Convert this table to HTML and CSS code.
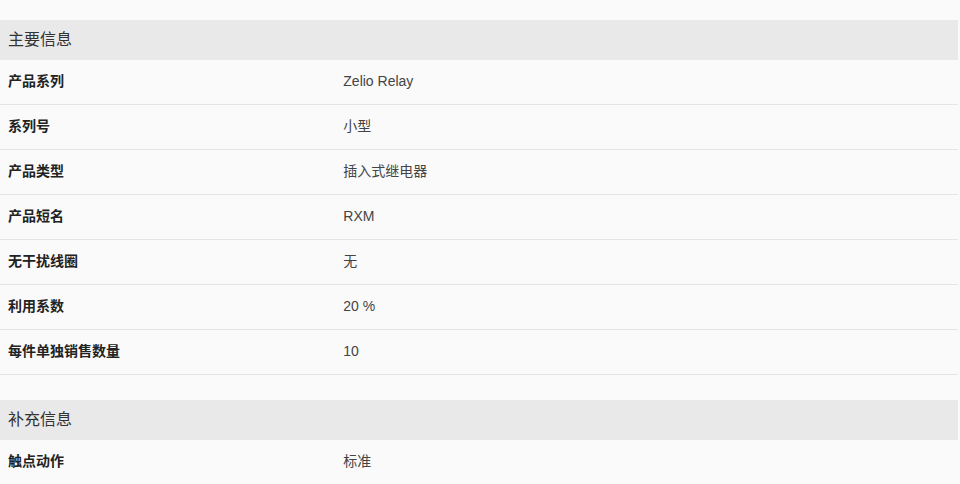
FILE: index.html
```html
<!DOCTYPE html>
<html lang="zh-CN">
<head>
  <meta charset="UTF-8" />
  <title>产品规格</title>
  <link rel="stylesheet" href="styles.css">
</head>
<body>
  <div class="specs">
    <div class="section">
      <h2 class="section-title">主要信息</h2>
      <table class="spec-table">
        <tr><th>产品系列</th><td>Zelio Relay</td></tr>
        <tr><th>系列号</th><td>小型</td></tr>
        <tr><th>产品类型</th><td>插入式继电器</td></tr>
        <tr><th>产品短名</th><td>RXM</td></tr>
        <tr><th>无干扰线圈</th><td>无</td></tr>
        <tr><th>利用系数</th><td>20 %</td></tr>
        <tr><th>每件单独销售数量</th><td>10</td></tr>
      </table>
    </div>
    <div class="section">
      <h2 class="section-title">补充信息</h2>
      <table class="spec-table">
        <tr><th>触点动作</th><td>标准</td></tr>
      </table>
    </div>
  </div>
</body>
</html>
```

FILE: styles.css
```css
/* Page */
body {
  margin: 0;
  background-color: #fafafa;
  font-family: 'Liberation Sans', 'Noto Sans CJK SC', Arial, sans-serif;
  color: #333;
}

.specs {
  width: 958px;
  padding-top: 20px;
}

.section {
  margin-bottom: 25px;
}

/* Section header */
.section-title {
  margin: 0;
  height: 40px;
  line-height: 40px;
  padding: 0 8px;
  background-color: #e9e9e9;
  font-size: 16px;
  font-weight: normal;
  color: #333;
}

/* Rows */
.spec-table {
  width: 100%;
  border-collapse: collapse;
  font-size: 14px;
  line-height: 20px;
}

.spec-table tr {
  border-bottom: 1px solid #e5e5e5;
}

.spec-table th,
.spec-table td {
  height: 42px;
  padding: 0 8px 2px;
  text-align: left;
  vertical-align: middle;
}

.spec-table th {
  width: 35%;
  font-weight: bold;
  color: #222;
}

.spec-table td {
  color: #444;
}
```
